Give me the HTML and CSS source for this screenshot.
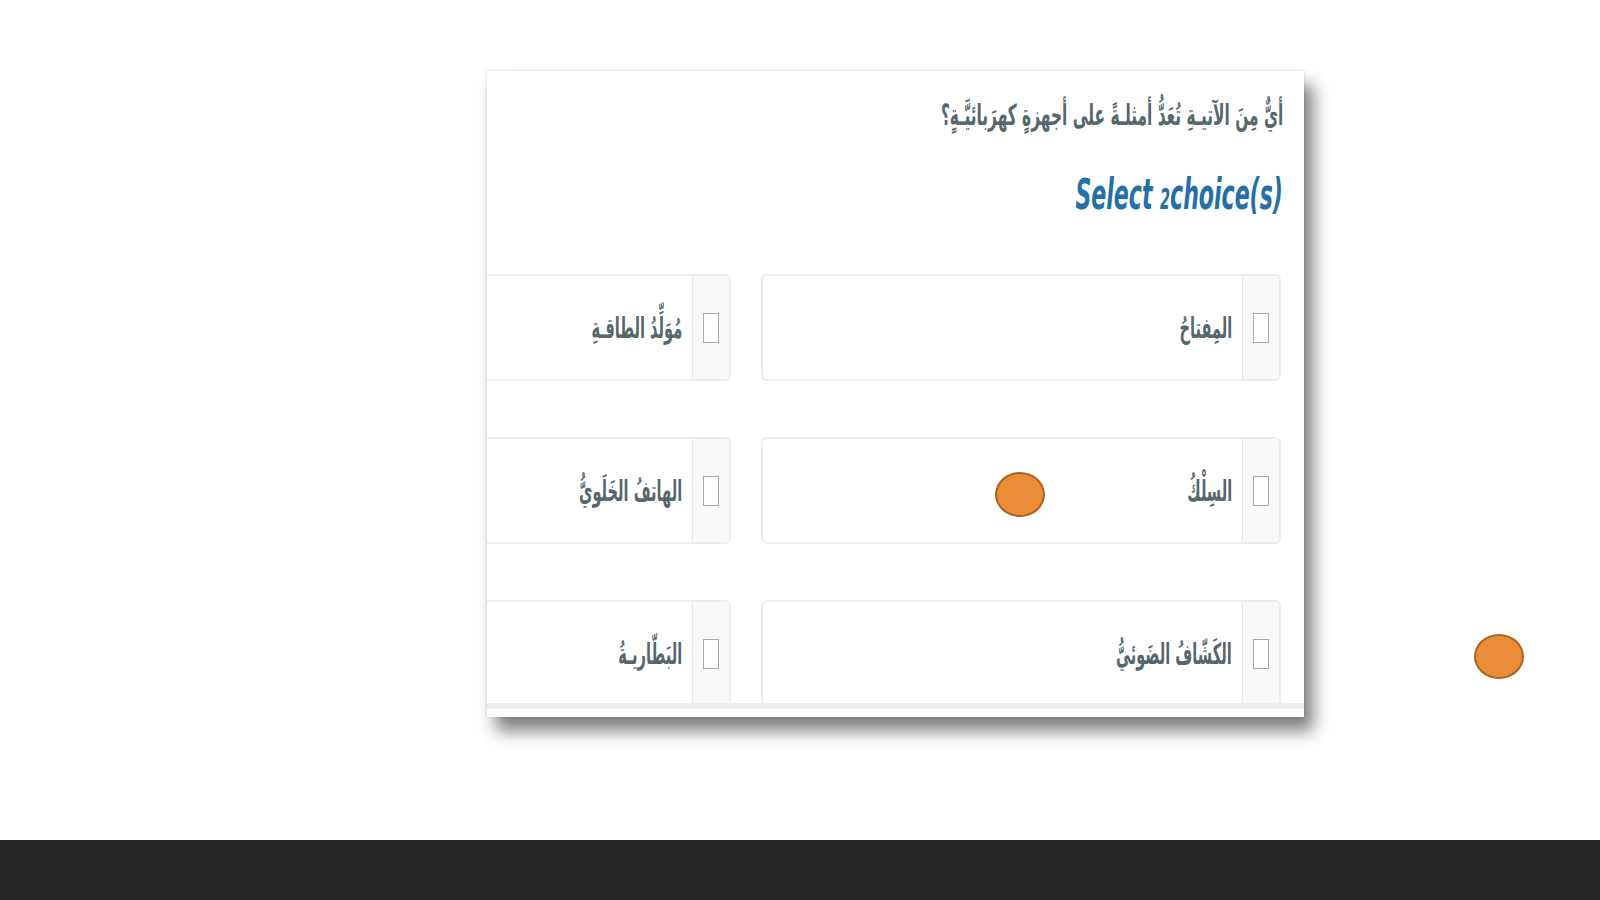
FILE: index.html
```html
<!DOCTYPE html>
<html lang="ar">
<head>
    <meta charset="UTF-8">
    <title>اختيار من متعدد</title>
    <link rel="stylesheet" href="styles.css">
</head>
<body>
    <div class="slide">
        <div class="stage">
            <!-- بطاقة السؤال -->
            <div class="card" dir="rtl">
                <p class="question"><span class="squeeze">أيٌّ مِنَ الآتيـةِ تُعَدُّ أمثلـةً على أجهزةٍ كهرَبائيَّـةٍ؟</span></p>
                <p class="hint"><span class="squeeze" dir="ltr">Select <span class="num">2</span>choice(s)</span></p>

                <div class="choices-wrap">
                    <div class="choices">
                        <label class="choice">
                            <span class="check"><span class="box"></span></span>
                            <span class="text">المِفتاحُ</span>
                        </label>
                        <label class="choice">
                            <span class="check"><span class="box"></span></span>
                            <span class="text">مُوَلِّدُ الطاقـةِ</span>
                        </label>
                        <label class="choice">
                            <span class="check"><span class="box"></span></span>
                            <span class="text">السِلْكُ</span>
                        </label>
                        <label class="choice">
                            <span class="check"><span class="box"></span></span>
                            <span class="text">الهاتفُ الخَلَويُّ</span>
                        </label>
                        <label class="choice">
                            <span class="check"><span class="box"></span></span>
                            <span class="text">الكَشّافُ الضَوئيُّ</span>
                        </label>
                        <label class="choice">
                            <span class="check"><span class="box"></span></span>
                            <span class="text">البَطّاريـةُ</span>
                        </label>
                    </div>
                </div>
            </div>

            <!-- علامات برتقالية -->
            <span class="dot dot-one"></span>
            <span class="dot dot-two"></span>
        </div>

        <div class="footer-bar"></div>
    </div>
</body>
</html>
```

FILE: styles.css
```css
body {
    margin: 0;
    background: #fff;
    font-family: "DejaVu Sans Condensed", "DejaVu Sans", sans-serif;
}

.slide {
    width: 1600px;
    height: 900px;
    display: flex;
    flex-direction: column;
    overflow: hidden;
}

.stage {
    position: relative;
    flex: 1;
    padding: 71px 0 0 487px;
}

.card {
    width: 817px;
    height: 646px;
    box-sizing: border-box;
    background: #fff;
    padding-bottom: 8px;
    overflow: hidden;
    display: flex;
    flex-direction: column;
    box-shadow: 9px 14px 16px rgba(0, 0, 0, 0.5), 0 0 3px rgba(0, 0, 0, 0.15);
}

/* the screenshot text is narrow, squeeze it sideways */
.squeeze {
    display: inline-block;
    transform-origin: right center;
}

.question {
    margin: 24px 0 0;
    padding-right: 21px;
    line-height: 40px;
    font-size: 29px;
    font-weight: bold;
    color: #56676c;
    text-align: right;
}

.question .squeeze {
    transform: scaleX(0.59);
}

.hint {
    margin: 37px 0 0;
    padding-right: 21px;
    line-height: 44px;
    font-style: italic;
    font-weight: bold;
    font-size: 43px;
    color: #2370a6;
    text-align: right;
}

.hint .squeeze {
    transform: scaleX(0.57);
}

.hint .num {
    font-size: 28px;
}

.choices-wrap {
    margin-top: 52px;
    padding-right: 23px;
    height: 430px;
    overflow: hidden;
    border-bottom: 6px solid #eeeeee;
}

.choices {
    display: grid;
    grid-template-columns: 520px 520px;
    grid-auto-rows: 107px;
    column-gap: 30px;
    row-gap: 56px;
}

.choice {
    display: flex;
    align-items: center;
    border: 2px solid #ececec;
    border-radius: 6px;
    background: #fff;
    overflow: hidden;
}

.check {
    align-self: stretch;
    width: 36px;
    flex-shrink: 0;
    background: #f9f9f9;
    border-left: 1px solid #e6e6e6;
    display: flex;
    align-items: center;
    justify-content: center;
}

.box {
    width: 14px;
    height: 28px;
    border: 1.5px solid #a9a9a9;
    background: #fff;
}

.text {
    display: inline-block;
    margin-right: 10px;
    font-size: 29px;
    font-weight: bold;
    color: #56676c;
    transform: scaleX(0.56);
    transform-origin: right center;
}

.dot {
    position: absolute;
    width: 46px;
    height: 41px;
    border-radius: 50%;
    background: #e98e37;
    border: 2px solid #ad6221;
}

.dot-one {
    left: 995px;
    top: 472px;
}

.dot-two {
    left: 1474px;
    top: 634px;
}

.footer-bar {
    height: 60px;
    background: #262626;
}
```
